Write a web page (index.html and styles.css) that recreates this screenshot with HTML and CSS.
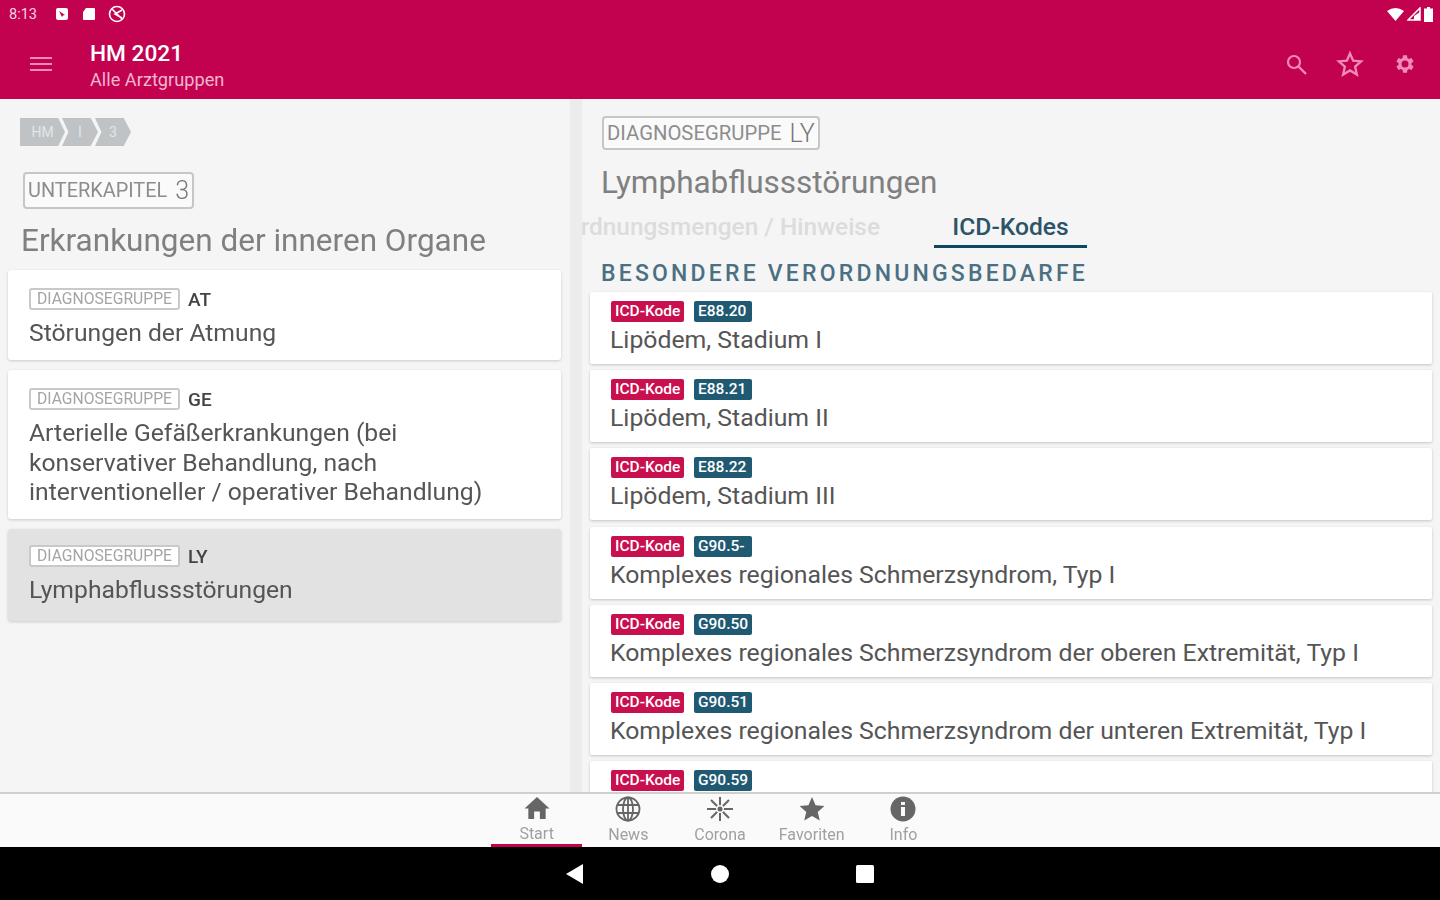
FILE: index.html
```html
<!DOCTYPE html>
<html lang="de">

<head>
  <meta charset="UTF-8" />
  <title>HM 2021</title>
  <link rel="stylesheet" href="styles.css">
</head>

<body>
  <header class="appbar">
    <div class="status">
      <div class="status-left">
        <span class="clock">8:13</span>
        <svg class="st-icon" viewBox="0 0 14 14"><rect x="1" y="1" width="12" height="12" rx="2" fill="#fff"/><path d="M4 4l6 4-2 .5L7 10z" fill="#c2024f"/></svg>
        <svg class="st-icon" viewBox="0 0 14 14"><path d="M4 1h8a1 1 0 0 1 1 1v10a1 1 0 0 1-1 1H2a1 1 0 0 1-1-1V5z" fill="#fff"/></svg>
        <svg class="st-icon st-wide" viewBox="0 0 18 18"><circle cx="9" cy="9" r="7.5" fill="none" stroke="#fff" stroke-width="1.6"/><path d="M4 4l10 10M14 5L7 9l7 4" fill="none" stroke="#fff" stroke-width="1.6"/></svg>
      </div>
      <div class="status-right">
        <svg width="17" height="14" viewBox="0 0 17 14"><path d="M0 4Q8.500-2 17 4L8.500 14z" fill="#fff"/></svg>
        <svg width="14" height="14" viewBox="0 0 14 14"><path d="M13 1v12H1z" fill="none" stroke="#fff" stroke-width="1.500"/><path d="M13 5v8H7V9z" fill="#fff"/></svg>
        <svg width="9" height="15" viewBox="0 0 9 15"><path d="M3 0h3v1.500h3V15H0V1.500h3z" fill="#fff"/></svg>
      </div>
    </div>
    <div class="toolbar">
      <svg class="menu" width="22" height="16" viewBox="0 0 22 16"><path d="M0 2h22M0 8h22M0 14h22" stroke="#f08cb4" stroke-width="2"/></svg>
      <div class="titles">
        <div class="title">HM 2021</div>
        <div class="subtitle">Alle Arztgruppen</div>
      </div>
      <div class="actions">
        <svg width="24" height="24" viewBox="0 0 24 24"><circle cx="10" cy="10" r="6" fill="none" stroke="#f08cb4" stroke-width="2.200"/><path d="M14.500 14.500L22 22" stroke="#f08cb4" stroke-width="2.400"/></svg>
        <svg width="28" height="28" viewBox="0 0 24 24"><path d="M12 3l2.700 6.200 6.800.6-5.100 4.500 1.500 6.700L12 17.500 6.100 21l1.500-6.700L2.500 9.800l6.800-.6z" fill="none" stroke="#f08cb4" stroke-width="2"/></svg>
        <svg width="24" height="24" viewBox="0 0 24 24"><path fill="#f08cb4" fill-rule="evenodd" d="M19.400 13a7.500 7.500 0 0 0 0-2l2.100-1.600-2-3.500-2.500 1a7.500 7.500 0 0 0-1.700-1L15 3.200h-4l-.4 2.700a7.500 7.500 0 0 0-1.700 1l-2.500-1-2 3.500L6.500 11a7.500 7.500 0 0 0 0 2l-2.100 1.600 2 3.500 2.500-1a7.500 7.500 0 0 0 1.700 1l.4 2.700h4l.4-2.700a7.500 7.500 0 0 0 1.700-1l2.500 1 2-3.500zM13 15.500a3.500 3.500 0 1 1 0-7 3.500 3.500 0 0 1 0 7z"/></svg>
      </div>
    </div>
  </header>

  <main class="panes">
    <section class="left">
      <div class="crumbs">
        <span class="crumb first">HM</span>
        <span class="crumb">I</span>
        <span class="crumb">3</span>
      </div>
      <div class="tag-big tag-chapter">UNTERKAPITEL <b>3</b></div>
      <h1 class="heading">Erkrankungen der inneren Organe</h1>

      <div class="group-card">
        <div class="group-line"><span class="tag-small">DIAGNOSEGRUPPE</span><b>AT</b></div>
        <div class="group-name">Störungen der Atmung</div>
      </div>
      <div class="group-card">
        <div class="group-line"><span class="tag-small">DIAGNOSEGRUPPE</span><b>GE</b></div>
        <div class="group-name">Arterielle Gefäßerkrankungen (bei<br>konservativer Behandlung, nach<br>interventioneller / operativer Behandlung)</div>
      </div>
      <div class="group-card selected">
        <div class="group-line"><span class="tag-small">DIAGNOSEGRUPPE</span><b>LY</b></div>
        <div class="group-name">Lymphabflussstörungen</div>
      </div>
    </section>

    <section class="right">
      <div class="tag-big tag-group">DIAGNOSEGRUPPE <b>LY</b></div>
      <h2 class="heading heading-right">Lymphabflussstörungen</h2>
      <div class="tabs">
        <div class="tab-off">Verordnungsmengen / Hinweise</div>
        <div class="tab-on">ICD-Kodes</div>
      </div>
      <h3 class="section-title">BESONDERE VERORDNUNGSBEDARFE</h3>

      <div class="code-card">
        <div class="code-tags"><span class="pill-red">ICD-Kode</span><span class="pill-blue">E88.20</span></div>
        <div class="code-name">Lipödem, Stadium I</div>
      </div>
      <div class="code-card">
        <div class="code-tags"><span class="pill-red">ICD-Kode</span><span class="pill-blue">E88.21</span></div>
        <div class="code-name">Lipödem, Stadium II</div>
      </div>
      <div class="code-card">
        <div class="code-tags"><span class="pill-red">ICD-Kode</span><span class="pill-blue">E88.22</span></div>
        <div class="code-name">Lipödem, Stadium III</div>
      </div>
      <div class="code-card">
        <div class="code-tags"><span class="pill-red">ICD-Kode</span><span class="pill-blue">G90.5-</span></div>
        <div class="code-name">Komplexes regionales Schmerzsyndrom, Typ I</div>
      </div>
      <div class="code-card">
        <div class="code-tags"><span class="pill-red">ICD-Kode</span><span class="pill-blue">G90.50</span></div>
        <div class="code-name">Komplexes regionales Schmerzsyndrom der oberen Extremität, Typ I</div>
      </div>
      <div class="code-card">
        <div class="code-tags"><span class="pill-red">ICD-Kode</span><span class="pill-blue">G90.51</span></div>
        <div class="code-name">Komplexes regionales Schmerzsyndrom der unteren Extremität, Typ I</div>
      </div>
      <div class="code-card">
        <div class="code-tags"><span class="pill-red">ICD-Kode</span><span class="pill-blue">G90.59</span></div>
      </div>
    </section>
  </main>

  <nav class="bottom-nav">
    <div class="nav-item active">
      <svg width="28" height="26" viewBox="0 0 28 26"><path d="M14 1L1 13h4v11h6v-8h6v8h6V13h4z" fill="#666"/></svg>
      <span>Start</span>
    </div>
    <div class="nav-item">
      <svg width="28" height="26" viewBox="0 0 28 26"><g fill="none" stroke="#666" stroke-width="1.800"><circle cx="14" cy="13" r="11.500"/><ellipse cx="14" cy="13" rx="5" ry="11.500"/><path d="M3 9h22M3 17h22M14 1.500v23"/></g></svg>
      <span>News</span>
    </div>
    <div class="nav-item">
      <svg width="28" height="26" viewBox="0 0 28 26"><g stroke="#666" stroke-width="2" fill="none"><path d="M14 1v24M1 13h26M5 4l18 18M23 4L5 22"/></g><circle cx="14" cy="13" r="4" fill="#fafafa"/><circle cx="14" cy="13" r="2.500" fill="#666"/></svg>
      <span>Corona</span>
    </div>
    <div class="nav-item">
      <svg width="28" height="26" viewBox="0 0 24 24"><path d="M12 1l3.300 7.600 8.200.7-6.200 5.400 1.900 8L12 18.500l-7.200 4.200 1.900-8L.5 9.300l8.200-.7z" fill="#666"/></svg>
      <span>Favoriten</span>
    </div>
    <div class="nav-item">
      <svg width="28" height="26" viewBox="0 0 28 26"><circle cx="14" cy="13" r="12.500" fill="#666"/><rect x="12" y="11" width="4" height="9" fill="#fafafa"/><rect x="12" y="6" width="4" height="3" fill="#fafafa"/></svg>
      <span>Info</span>
    </div>
  </nav>

  <footer class="sysnav">
    <svg width="18" height="20" viewBox="0 0 18 20"><path d="M17 0v20L0 10z" fill="#fff"/></svg>
    <svg width="18" height="18" viewBox="0 0 18 18"><circle cx="9" cy="9" r="9" fill="#fff"/></svg>
    <svg width="18" height="18" viewBox="0 0 18 18"><rect width="18" height="18" rx="1.500" fill="#fff"/></svg>
  </footer>
</body>

</html>
```

FILE: styles.css
```css
* {
  box-sizing: border-box;
  font-family: "Roboto", sans-serif;
}

html,
body {
  margin: 0;
  padding: 0;
  height: 900px;
  overflow: hidden;
}

body {
  display: flex;
  flex-direction: column;
  background-color: #f5f5f5;
  filter: blur(0.6px);
}

/* App bar */
.appbar {
  height: 99px;
  flex: none;
  background-color: #c2024f;
  color: white;
}

.status {
  height: 28px;
  padding: 0 7px 0 9px;
  display: flex;
  align-items: center;
  justify-content: space-between;
}

.status-left,
.status-right {
  display: flex;
  align-items: center;
}

.status-left {
  gap: 13px;
}

.status-right {
  gap: 3px;
}

.clock {
  font-size: 14.500px;
  color: #f5d5e2;
  width: 34px;
  margin-right: -1px;
}

.st-icon {
  width: 14px;
  height: 14px;
}

.st-wide {
  width: 18px;
  height: 18px;
  margin-left: -1px;
}

.toolbar {
  height: 71px;
  display: flex;
  align-items: center;
  padding: 0 24px 0 30px;
}

.titles {
  margin-left: 38px;
  margin-top: 5px;
}

.title {
  font-size: 22.700px;
  font-weight: 500;
  line-height: 28px;
}

.subtitle {
  font-size: 18.200px;
  line-height: 24px;
  color: #f3b6cf;
}

.actions {
  margin-left: auto;
  display: flex;
  align-items: center;
  gap: 28px;
}

/* Panes */
.panes {
  flex: 1;
  min-height: 0;
  display: flex;
}

.left {
  width: 570px;
  flex: none;
  padding: 19px 9px 0 8px;
  overflow: hidden;
}

.right {
  flex: 1;
  min-width: 0;
  padding: 17px 8px 0 8px;
  overflow: hidden;
  background-color: #f5f5f5;
  border-left: 12px solid #ececec;
}

/* Breadcrumb */
.crumbs {
  display: flex;
  margin-left: 12px;
  height: 28px;
}

.crumb {
  width: 36px;
  height: 28px;
  margin-right: -3px;
  background-color: #bfc3c5;
  color: #e4e6e7;
  font-size: 14px;
  line-height: 28px;
  text-align: center;
  clip-path: polygon(0 0, 80% 0, 100% 50%, 80% 100%, 0 100%, 18% 50%);
}

.crumb.first {
  width: 45px;
  clip-path: polygon(0 0, 85% 0, 100% 50%, 85% 100%, 0 100%);
}

/* Tags */
.tag-big {
  display: inline-flex;
  align-items: center;
  height: 37px;
  border: 2px solid #c4c6c7;
  border-radius: 4px;
  background-color: #fafafa;
  color: #8d8d8d;
  font-size: 19.900px;
  padding: 0 3px;
  white-space: pre;
}

.tag-big b {
  font-weight: 300;
  font-size: 25px;
  margin-left: 3px;
  color: #777;
}

.tag-chapter {
  margin: 26px 0 0 15px;
}

.tag-group {
  margin-left: 12px;
  height: 34px;
  font-size: 20.300px;
}

.heading {
  margin: 0;
  font-size: 31.500px;
  font-weight: 400;
  color: #808080;
  line-height: 40px;
}

.left .heading {
  margin: 12px 0 9px 13px;
}

.heading-right {
  margin: 13px 0 0 11px;
}

/* Left cards */
.group-card {
  background-color: white;
  border-radius: 3px;
  box-shadow: 0 1px 3px rgba(0, 0, 0, 0.18);
  padding: 16px 22px 13px;
  margin-bottom: 10px;
}

.group-card.selected {
  background-color: #e2e2e2;
  padding: 14px 22px 17px;
}

.group-line {
  display: flex;
  align-items: center;
  gap: 8px;
  height: 26px;
}

.group-line b {
  font-size: 19px;
  font-weight: 500;
  color: #444;
}

.tag-small {
  border: 2px solid #c9c9c9;
  border-radius: 3px;
  font-size: 15.700px;
  line-height: 18px;
  height: 22px;
  width: 151px;
  margin-left: -1px;
  text-align: center;
  color: #a4a4a4;
  background-color: #fff;
}

.group-name {
  font-size: 24.700px;
  line-height: 29.300px;
  color: #555;
  margin-top: 6px;
  white-space: nowrap;
  margin-left: -1px;
}

/* Tabs */
.tabs {
  display: flex;
  height: 43px;
  margin-top: 2px;
  justify-content: flex-end;
  overflow: hidden;
  margin-left: -8px;
  width: 505px;
}

.tab-off {
  font-size: 24.400px;
  font-weight: 500;
  color: #dcdcdc;
  line-height: 44px;
  white-space: nowrap;
  margin-right: 54px;
  flex: none;
}

.tab-on {
  width: 153px;
  flex: none;
  font-size: 24.600px;
  font-weight: 500;
  color: #2b5468;
  text-align: center;
  line-height: 44px;
  border-bottom: 3px solid #0f4660;
}

.section-title {
  margin: 12px 0 4px 11px;
  font-size: 23px;
  font-weight: 500;
  letter-spacing: 3.200px;
  line-height: 28px;
  color: #4b7083;
}

/* Right cards */
.code-card {
  background-color: white;
  border-radius: 2px;
  box-shadow: 0 1px 3px rgba(0, 0, 0, 0.2);
  height: 72px;
  padding: 9px 20px 0;
  margin-bottom: 6.200px;
}

.code-tags {
  display: flex;
  gap: 10px;
  height: 21px;
  margin-left: 1px;
}

.pill-red,
.pill-blue {
  font-size: 15.500px;
  font-weight: 500;
  line-height: 21px;
  height: 21px;
  padding: 0 4px;
  border-radius: 2px;
  color: white;
}

.pill-red {
  background-color: #c9104f;
  width: 73px;
  white-space: nowrap;
  overflow: hidden;
}

.pill-blue {
  background-color: #205a72;
  min-width: 58px;
}

.code-name {
  font-size: 24.800px;
  line-height: 30px;
  margin-top: 3px;
  color: #555;
  white-space: nowrap;
}

/* Bottom navigation */
.bottom-nav {
  height: 55px;
  flex: none;
  display: flex;
  justify-content: center;
  background-color: #fafafa;
  border-top: 2px solid #cfcfcf;
}

.nav-item {
  width: 91.700px;
  display: flex;
  flex-direction: column;
  align-items: center;
  padding-top: 2px;
  color: #a0a0a0;
  font-size: 16px;
  line-height: 20px;
}

.nav-item span {
  margin-top: 3px;
}

.nav-item.active {
  border-bottom: 3px solid #c2024f;
}

.sysnav {
  height: 53px;
  flex: none;
  background-color: black;
  display: flex;
  align-items: center;
  justify-content: center;
  gap: 127px;
}
```
